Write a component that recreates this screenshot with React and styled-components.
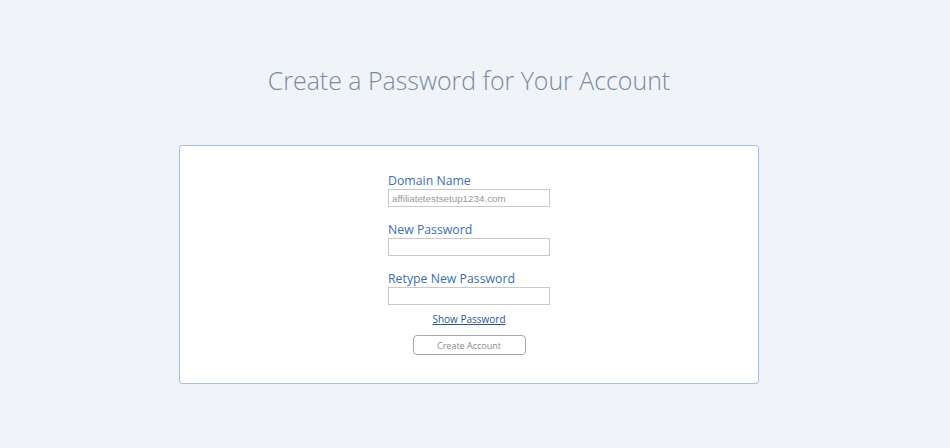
import styled, { createGlobalStyle } from "styled-components";

const GlobalStyle = createGlobalStyle`
  html, body {
    margin: 0;
    padding: 0;
    background: #f0f4f9;
    font-family: "Open Sans", "Liberation Sans", sans-serif;
  }
`;

const Page = styled.div`
  display: flex;
  flex-direction: column;
  align-items: center;
  width: 950px;
  height: 448px;
  padding: 64px 12px 0 0;
  box-sizing: border-box;
`;

const Title = styled.h1`
  margin: 0;
  font-size: 24.9px;
  line-height: 32px;
  font-weight: 300;
  color: #7a899f;
`;

const Card = styled.div`
  margin-top: 49px;
  width: 580px;
  height: 239px;
  box-sizing: border-box;
  background: #fff;
  border: 1px solid #a9c0dc;
  border-radius: 3px;
  display: flex;
  justify-content: center;
  padding-top: 26px;
`;

const Form = styled.form`
  width: 162px;
  display: flex;
  flex-direction: column;
`;

const Field = styled.div`
  display: flex;
  flex-direction: column;
  margin-bottom: 14px;
`;

const Label = styled.label`
  font-size: 12.3px;
  line-height: 16px;
  padding-top: 1px;
  color: #3c6db0;
`;

const Input = styled.input`
  height: 18px;
  box-sizing: border-box;
  border: 1px solid #c9c9c9;
  border-radius: 0;
  padding: 0 3px;
  font-family: "Liberation Sans", Arial, sans-serif;
  font-size: 9.8px;
  color: #999;
  background: #fff;
  outline: none;
`;

const ShowLink = styled.a`
  align-self: center;
  margin-top: -8px;
  font-size: 10px;
  line-height: 16px;
  color: #2b5690;
  text-decoration: underline;
  cursor: pointer;
`;

const Button = styled.button`
  align-self: center;
  margin-top: 8px;
  width: 113px;
  height: 20px;
  box-sizing: border-box;
  background: #fff;
  border: 1px solid #a8a8a8;
  border-radius: 4px;
  font-family: "Open Sans", "Liberation Sans", sans-serif;
  font-size: 9px;
  color: #8a8a8a;
  padding: 0;
`;

const fields = [
  { id: "domain", label: "Domain Name", value: "affiliatetestsetup1234.com" },
  { id: "pw", label: "New Password", type: "password" },
  { id: "pw2", label: "Retype New Password", type: "password" },
];

export default function App() {
  return (
    <>
      <GlobalStyle />
      <Page>
        <Title>Create a Password for Your Account</Title>
        <Card>
          <Form onSubmit={(e) => e.preventDefault()}>
            {fields.map((f) => (
              <Field key={f.id}>
                <Label htmlFor={f.id}>{f.label}</Label>
                <Input
                  id={f.id}
                  type={f.type || "text"}
                  defaultValue={f.value}
                  readOnly={!!f.value}
                />
              </Field>
            ))}
            <ShowLink>Show Password</ShowLink>
            <Button type="submit">Create Account</Button>
          </Form>
        </Card>
      </Page>
    </>
  );
}
